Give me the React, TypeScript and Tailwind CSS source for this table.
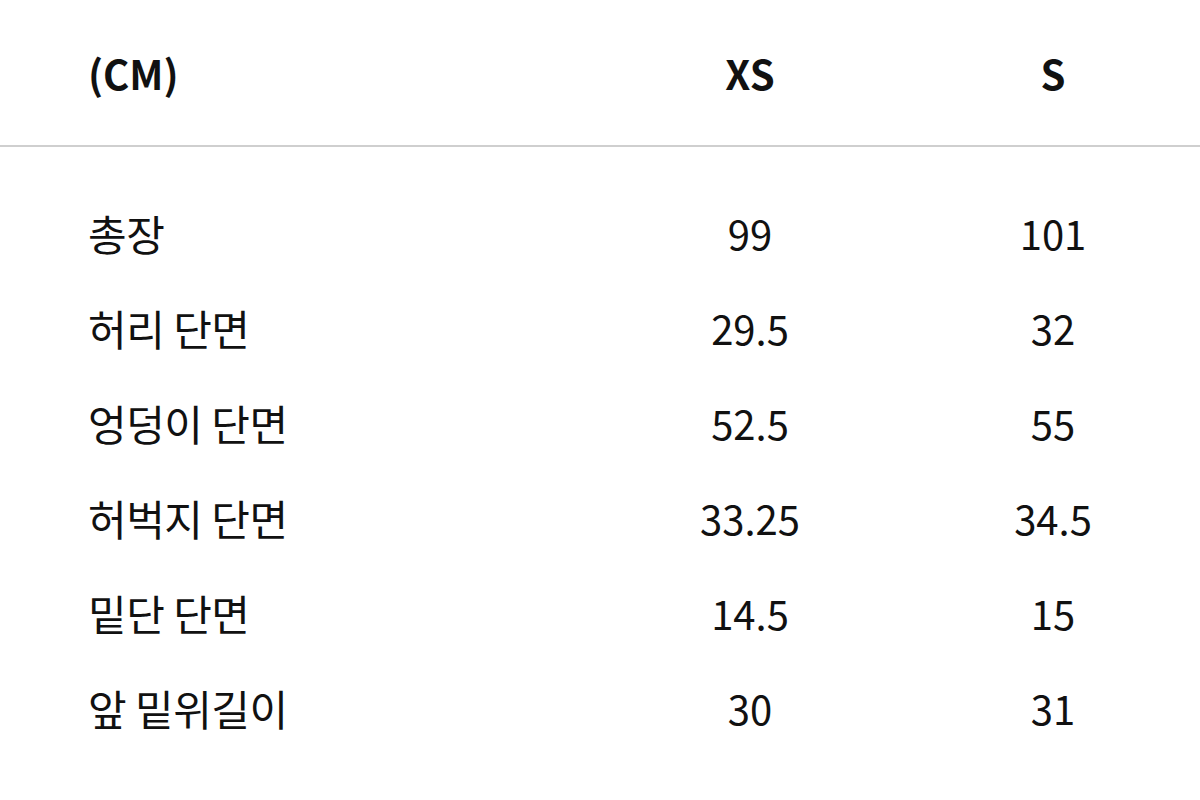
const rows = [
  { label: '총장', xs: '99', s: '101' },
  { label: '허리 단면', xs: '29.5', s: '32' },
  { label: '엉덩이 단면', xs: '52.5', s: '55' },
  { label: '허벅지 단면', xs: '33.25', s: '34.5' },
  { label: '밑단 단면', xs: '14.5', s: '15' },
  { label: '앞 밑위길이', xs: '30', s: '31' },
];

export default function App() {
  return (
    <div className="w-[1200px] h-[800px] bg-white text-[#111] font-['Noto_Sans_CJK_KR',sans-serif] overflow-hidden">
      <div className="grid grid-cols-[512px_300px_306px] pl-[88px] h-[145px] items-center text-[40px] font-semibold">
        <div>(CM)</div>
        <div className="text-center">XS</div>
        <div className="text-center">S</div>
      </div>
      <div className="h-[2px] bg-[#cfcfcf]" />
      <div className="pt-[38px]">
        {rows.map((r) => (
          <div key={r.label} className="grid grid-cols-[512px_300px_306px] pl-[88px] h-[95px] items-center text-[40px]">
            <div className="text-[42px] tracking-[-0.5px]">{r.label}</div>
            <div className="text-center">{r.xs}</div>
            <div className="text-center">{r.s}</div>
          </div>
        ))}
      </div>
    </div>
  );
}
